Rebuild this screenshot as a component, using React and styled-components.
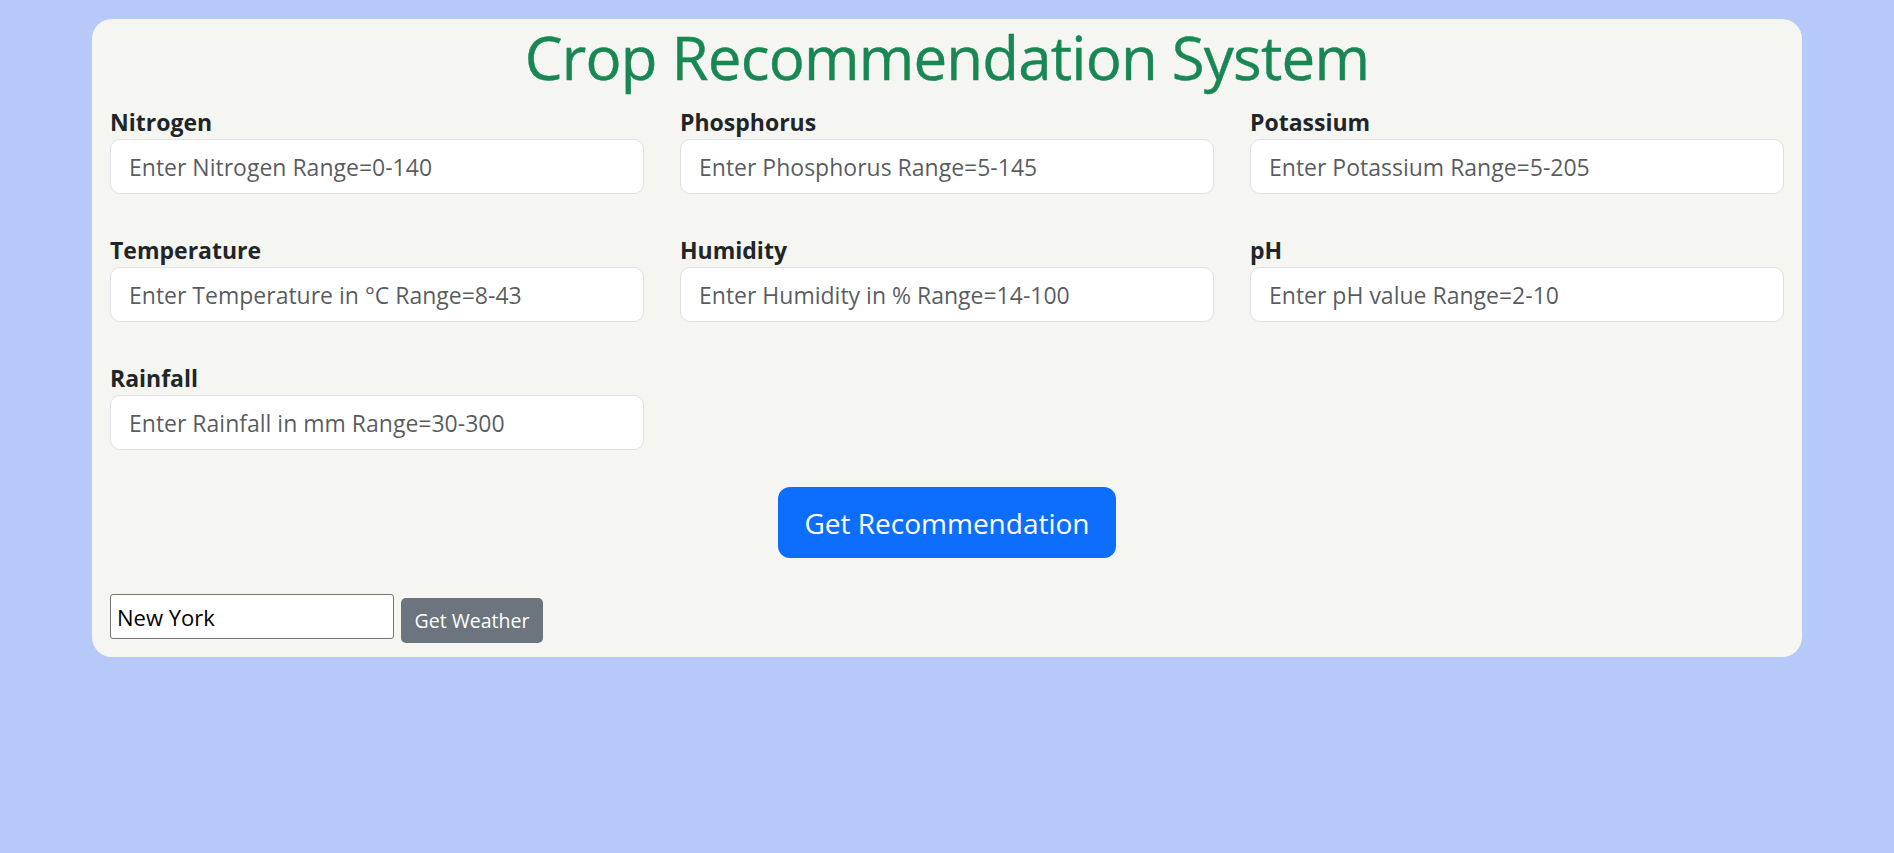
import React from "react"
import styled, { createGlobalStyle } from "styled-components"

const GlobalStyle = createGlobalStyle`
  body {
    margin: 0;
    background: #b7c9f8;
    font-family: "Open Sans", "Noto Sans", sans-serif;
    color: #212529;
  }
`

const Page = styled.div`
  min-height: 853px;
  padding-top: 19px;
  box-sizing: border-box;
`

const Card = styled.main`
  width: 1710px;
  margin: 0 auto;
  box-sizing: border-box;
  padding: 2px 18px 14px;
  background: #f5f6f1;
  border-radius: 20px;
`

const Title = styled.h1`
  margin: 0 0 15px;
  font-size: 60px;
  line-height: 72px;
  font-weight: 400;
  text-align: center;
  color: #198754;
  letter-spacing: -0.8px;
  -webkit-text-stroke: 0.4px #198754;
`

const FieldGrid = styled.div`
  display: grid;
  grid-template-columns: repeat(3, 1fr);
  column-gap: 36px;
  row-gap: 42px;
`

const Field = styled.div`
  display: flex;
  flex-direction: column;
`

const Label = styled.label`
  font-size: 23px;
  line-height: 29px;
  font-weight: 700;
  margin-bottom: 2px;
  color: #212529;
`

const Input = styled.input`
  height: 55px;
  box-sizing: border-box;
  padding: 0 18px;
  font-family: inherit;
  font-size: 23px;
  color: #212529;
  background: #fff;
  border: 1px solid #dee2e6;
  border-radius: 10px;
  outline: none;

  &::placeholder {
    color: rgba(33, 37, 41, 0.75);
  }
`

const Actions = styled.div`
  display: flex;
  justify-content: center;
  margin-top: 37px;
`

const PrimaryButton = styled.button`
  width: 338px;
  height: 71px;
  border: none;
  border-radius: 12px;
  background: #0d6efd;
  color: #fff;
  font-family: inherit;
  font-size: 28px;
  cursor: pointer;
`

const WeatherRow = styled.div`
  display: flex;
  align-items: flex-start;
  gap: 7px;
  margin-top: 36px;
`

const CityInput = styled.input`
  width: 284px;
  height: 45px;
  box-sizing: border-box;
  padding: 0 6px;
  font-family: inherit;
  font-size: 22px;
  color: #000;
  border: 1px solid #767676;
  border-radius: 3px;
  background: #fff;
`

const SecondaryButton = styled.button`
  margin-top: 4px;
  width: 142px;
  height: 45px;
  border: none;
  border-radius: 5px;
  background: #6c757d;
  color: #fff;
  font-family: inherit;
  font-size: 19.5px;
  cursor: pointer;
`

const fields = [
  { label: "Nitrogen", placeholder: "Enter Nitrogen Range=0-140" },
  { label: "Phosphorus", placeholder: "Enter Phosphorus Range=5-145" },
  { label: "Potassium", placeholder: "Enter Potassium Range=5-205" },
  { label: "Temperature", placeholder: "Enter Temperature in °C Range=8-43" },
  { label: "Humidity", placeholder: "Enter Humidity in % Range=14-100" },
  { label: "pH", placeholder: "Enter pH value Range=2-10" },
  { label: "Rainfall", placeholder: "Enter Rainfall in mm Range=30-300" },
]

export default function App() {
  return (
    <>
      <GlobalStyle />
      <Page>
        <Card>
          <Title>Crop Recommendation System</Title>
          <FieldGrid>
            {fields.map(f => (
              <Field key={f.label}>
                <Label>{f.label}</Label>
                <Input type="text" placeholder={f.placeholder} />
              </Field>
            ))}
          </FieldGrid>
          <Actions>
            <PrimaryButton>Get Recommendation</PrimaryButton>
          </Actions>
          <WeatherRow>
            <CityInput defaultValue="New York" />
            <SecondaryButton>Get Weather</SecondaryButton>
          </WeatherRow>
        </Card>
      </Page>
    </>
  )
}
